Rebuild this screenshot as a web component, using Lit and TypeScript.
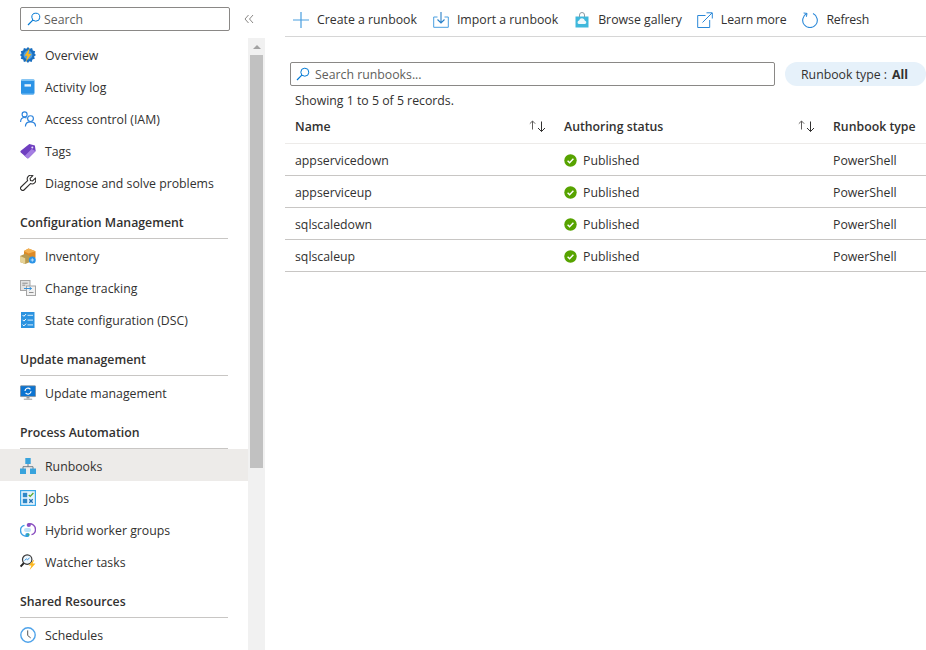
import { LitElement, html, css, svg } from "lit";
import { customElement } from "lit/decorators.js";

const icons: Record<string, unknown> = {
  overview: svg`<path d="M8 0l1.7 1.8 2.4-.7.7 2.4 2.4.7-.7 2.4L16 8l-1.9 1.4.7 2.4-2.4.7-.7 2.4-2.4-.7L8 16l-1.7-1.8-2.4.7-.7-2.4-2.4-.7.7-2.4L0 8l1.5-1.4-.7-2.4 2.4-.7.7-2.4 2.4.7z" fill="#1a6fc0"/><circle cx="8" cy="8" r="4.4" fill="#4f9fe3"/><path d="M9.8 .8L4.6 8.8h2.8L5.8 15l5.6-8H8.4z" fill="#fdb81e"/>`,
  log: svg`<rect x="1" y=".5" width="13.5" height="15" rx="1.4" fill="#2b93e6"/><rect x="1" y=".5" width="13.5" height="1.6" rx=".8" fill="#7fc3f3"/><rect x="4.5" y="5.2" width="6.5" height="2.4" fill="#e8f4fd"/><path d="M1.6 14.8h12.4" stroke="#5fb0ee"/>`,
  iam: svg`<g fill="none" stroke="#2a82dc" stroke-width="1.15"><circle cx="4.6" cy="3.4" r="2.5"/><path d="M.6 11c0-2.9 1.6-4.5 4-4.5 .8 0 1.5.2 2 .5"/><circle cx="10.5" cy="7.6" r="2.9"/><path d="M5.4 15.6c0-3 2.1-4.8 5.1-4.8s5.1 1.8 5.1 4.8"/></g>`,
  tags: svg`<path d="M9.3 1l5.6 1.6.8 5.5-7 7a1.1 1.1 0 0 1-1.6 0L.8 9.4a1.1 1.1 0 0 1 0-1.6z" fill="#6f3fc0"/><path d="M4.6 12.9l7-7 4 2.2-7 7a1.1 1.1 0 0 1-1.6 0z" fill="#a57fe2"/><circle cx="12.3" cy="4.4" r="1" fill="#e8def8"/>`,
  wrench: svg`<path d="M15.4 3.2l-2.8 2.7-2.1-.4-.4-2.1L12.8.7C11 0 9 .4 8 1.7 7.1 2.8 7 4.3 7.6 5.6L1 12a1.7 1.7 0 0 0 0 2.4l.6.6a1.7 1.7 0 0 0 2.4 0l6.5-6.4c1.3.5 2.8.4 3.9-.5 1.2-1 1.8-3 1-4.9z" fill="#fff" stroke="#2f2e2d" stroke-width="1.1"/>`,
  inventory: svg`<path d="M8.5 .5l7 2.8v6.4L8.5 12 4 10V3z" fill="#dd8a26"/><path d="M3.8 3L8.5 5.6l7-2.3-7-2.8z" fill="#f3b152"/><path d="M0 8l5.2-2.2L10 8v6l-4.8 2L0 14z" fill="#b89a50"/><path d="M0 8l5.2 2.2V16L0 14z" fill="#e6d296"/><circle cx="12.3" cy="12" r="3.5" fill="#2b93e6"/><path d="M10.6 12h3.4M12.3 10.3v3.4" stroke="#d2ecff" stroke-width=".8"/>`,
  change: svg`<rect x=".5" y=".5" width="9.5" height="10" fill="#e2e2e2" stroke="#a5a5a5"/><rect x="6.5" y="6" width="9" height="9.5" fill="#f1f1f1" stroke="#a5a5a5"/><path d="M2.3 3.2h5.4M2.3 5.2h3M9 12.5h4.5" stroke="#8f8f8f"/><path d="M4 8.5h7.5M9.5 7l2 1.5-2 1.5" stroke="#3592dc" fill="none"/>`,
  state: svg`<rect x="1" y="0" width="13.5" height="16" fill="#2b93e0"/><path d="M2.6 3l1.3 1.3L6 2.1M2.6 7.8l1.3 1.3L6 6.9M2.6 12.6l1.3 1.3L6 11.7" stroke="#fff" fill="none"/><path d="M7.5 3.3h5.5M7.5 8.1h5.5M7.5 12.9h5.5" stroke="#d6edfc"/>`,
  update: svg`<rect x=".4" y=".8" width="15.2" height="10.8" rx=".6" fill="#0c74d1" stroke="#8a8a8a" stroke-width=".7"/><path d="M5 6a3 3 0 0 1 5.4-1.7M11 6.2a3 3 0 0 1-5.4 1.7" stroke="#fff" fill="none" stroke-width="1.2"/><rect x="6.5" y="11.6" width="3" height="2" fill="#9a9a9a"/><rect x="3.8" y="13.6" width="8.4" height="1.3" fill="#b0b0b0"/>`,
  runbooks: svg`<path d="M8 6v3M3 11V8.7h10V11" stroke="#6f7f8c" fill="none"/><rect x="5.3" y="0" width="5.4" height="6" fill="#38a3dc"/><rect x="0" y="10.5" width="6" height="5.5" fill="#38a3dc"/><rect x="10" y="10.5" width="6" height="5.5" fill="#38a3dc"/>`,
  jobs: svg`<rect x=".6" y=".6" width="14.8" height="14.8" fill="#e6f4fd" stroke="#3ca8e8" stroke-width="1.2"/><rect x="2.8" y="2.8" width="4.4" height="4.4" fill="#2f88c8"/><rect x="2.8" y="8.8" width="4.4" height="4.4" fill="#2f88c8"/><path d="M8.8 5l1.4 1.4L13.4 3" stroke="#5ba829" fill="none" stroke-width="1.3"/><path d="M9.3 9.3l3.4 3.4M12.7 9.3l-3.4 3.4" stroke="#1f6db0" stroke-width="1.3"/>`,
  hybrid: svg`<path d="M8.5 1.8c3.6-.6 7 1.8 7 5.6 0 2.6-1.6 4.6-4 5.2" fill="none" stroke="#8a4fc0" stroke-width="1.4"/><path d="M7.5 14.2C3.9 14.8.5 12.4.5 8.6c0-2.6 1.6-4.6 4-5.2" fill="none" stroke="#3ca0e4" stroke-width="1.4"/><circle cx="8.8" cy="3" r="2.1" fill="#8a4fc0"/><circle cx="7.4" cy="13" r="2.1" fill="#2f9ee0"/><rect x="4" y="6" width="7" height="4" rx="2" fill="#bfe2f8"/><circle cx="8.5" cy="12.5" r="1" fill="#47b06e"/>`,
  watcher: svg`<circle cx="7.2" cy="5.6" r="4.7" fill="#eff7fd" stroke="#3a3a3a" stroke-width="1.2"/><path d="M4.6 6.6l1.7-1.8 1.3 1.1 1.9-2.2" stroke="#3592dc" fill="none"/><path d="M3.8 9.2L.6 12.6" stroke="#222" stroke-width="1.9"/><path d="M13.6 6L8.6 11.6h2.8L9.6 16l5.9-6.4h-2.9L14.2 6z" fill="#fdb81e"/>`,
  clock: svg`<circle cx="8" cy="8" r="7.2" fill="#fff" stroke="#4fa3ea" stroke-width="1.4"/><path d="M7.7 3.4V8.5l3 2.4" stroke="#555" fill="none"/>`,
};

const searchIcon = html`<svg class="mag" viewBox="0 0 14 14"><circle cx="8.8" cy="5.2" r="4" fill="none" stroke="#0078d4"/><path d="M5.8 8.2L1 13" stroke="#0078d4" stroke-width="1.2"/></svg>`;

const nav: ({ h: string } | { i: string; t: string; sel?: boolean })[] = [
  { i: "overview", t: "Overview" },
  { i: "log", t: "Activity log" },
  { i: "iam", t: "Access control (IAM)" },
  { i: "tags", t: "Tags" },
  { i: "wrench", t: "Diagnose and solve problems" },
  { h: "Configuration Management" },
  { i: "inventory", t: "Inventory" },
  { i: "change", t: "Change tracking" },
  { i: "state", t: "State configuration (DSC)" },
  { h: "Update management" },
  { i: "update", t: "Update management" },
  { h: "Process Automation" },
  { i: "runbooks", t: "Runbooks", sel: true },
  { i: "jobs", t: "Jobs" },
  { i: "hybrid", t: "Hybrid worker groups" },
  { i: "watcher", t: "Watcher tasks" },
  { h: "Shared Resources" },
  { i: "clock", t: "Schedules" },
];

const rows = ["appservicedown", "appserviceup", "sqlscaledown", "sqlscaleup"];

const sortIcon = html`<svg class="sort" viewBox="0 0 17 13"><path d="M3.5 9.5V1M.8 3.7L3.5 1l2.7 2.7" fill="none" stroke="#605e5c"/><path d="M12.5 1.5v10M9 8l3.5 3.5L16 8" fill="none" stroke="#323130"/></svg>`;

@customElement("app-root")
export class AppRoot extends LitElement {
  static styles = css`
    :host { display: flex; width: 926px; height: 650px; overflow: hidden; font-family: "Open Sans", "Noto Sans", sans-serif; font-size: 12.3px; color: #323130; background: #fff; }
    .side { width: 265px; height: 650px; flex: none; display: grid; grid-template-columns: 248px 17px; grid-template-rows: 38px 612px; }
    .side-top { grid-column: 1 / 3; display: flex; align-items: flex-start; padding: 7px 0 0 20px; }
    .sbox { box-sizing: border-box; width: 210px; height: 24px; border: 1px solid #8a8886; border-radius: 2px; display: flex; align-items: center; gap: 3px; padding-left: 6px; color: #605e5c; }
    .mag { width: 14px; height: 14px; flex: none; }
    .collapse { width: 10px; height: 10px; margin: 7px 0 0 14px; }
    .menu { overflow: hidden; }
    .item { height: 32px; box-sizing: border-box; display: flex; align-items: center; padding: 2px 0 0 20px; gap: 9px; }
    .item svg { width: 16px; height: 16px; flex: none; }
    .item.sel { background: #edebe9; }
    .head { height: 41px; box-sizing: border-box; margin: 0 20px; border-bottom: 1px solid #c8c6c4; font-weight: 600; line-height: 16px; display: flex; align-items: flex-end; padding-bottom: 7px; }
    .bar { background: #f1f1f1; width: 17px; display: flex; flex-direction: column; align-items: center; }
    .arrow { height: 17px; flex: none; display: flex; align-items: center; justify-content: center; }
    .arrow i { border: 4px solid transparent; border-bottom: 4px solid #a3a3a3; border-top: 0; }
    .thumb { width: 13px; height: 413px; background: #c1c1c1; }
    .main { flex: 1; min-width: 0; padding-left: 20px; }
    .cmd { height: 37px; box-sizing: border-box; border-bottom: 1px solid #d6d6d6; display: flex; align-items: center; padding: 3px 0 0 8px; }
    .cmd span { display: flex; align-items: center; gap: 8px; margin-right: 16px; white-space: nowrap; }
    .cmd span.gallery { margin-right: 15px; }
    .cmd span.tight { letter-spacing: -0.1px; }
    .cmd span.tighter { letter-spacing: -0.2px; }
    .cmd svg { width: 16px; height: 16px; flex: none; }
    .filter { display: flex; align-items: center; gap: 10px; margin: 25px 0 0 5px; }
    .fbox { box-sizing: border-box; width: 485px; height: 24px; border: 1px solid #8a8886; border-radius: 2px; display: flex; align-items: center; gap: 5px; padding-left: 5px; color: #605e5c; }
    .pill { background: #e6f1fa; border-radius: 12px; height: 24px; width: 141px; flex: none; box-sizing: border-box; padding-left: 16px; display: flex; align-items: center; white-space: nowrap; }
    .pill b { font-weight: 700; margin-left: 5px; }
    .count { margin: 5px 0 0 10px; height: 20px; line-height: 20px; }
    .table { width: 641px; overflow: hidden; }
    .tr { display: grid; grid-template-columns: 269px 269px 103px; height: 32px; box-sizing: border-box; padding-top: 2px; border-bottom: 1px solid #c8c6c4; align-items: center; white-space: nowrap; }
    .tr.th { height: 33px; padding-top: 0; padding-bottom: 2px; border-bottom-color: #edebe9; font-weight: 600; }
    .tr > div { padding-left: 10px; min-width: 0; display: flex; align-items: center; }
    .sort { width: 17px; height: 13px; margin-left: auto; margin-right: 8px; flex: none; }
    .ok { width: 13px; height: 13px; margin-right: 6px; flex: none; }
  `;

  render() {
    return html`
      <div class="side">
        <div class="side-top">
          <div class="sbox">${searchIcon}<span>Search</span></div>
          <svg class="collapse" viewBox="0 0 10 10"><path d="M4.5 1L1 5l3.5 4M9 1L5.5 5 9 9" fill="none" stroke="#8a8886"/></svg>
        </div>
        <div class="menu">
          ${nav.map((n) =>
            "h" in n
              ? html`<div class="head">${n.h}</div>`
              : html`<div class="item ${n.sel ? "sel" : ""}"><svg viewBox="0 0 16 16">${icons[n.i]}</svg><span>${n.t}</span></div>`
          )}
        </div>
        <div class="bar"><div class="arrow"><i></i></div><div class="thumb"></div></div>
      </div>
      <div class="main">
        <div class="cmd">
          <span><svg viewBox="0 0 16 16"><path d="M8 0v16M0 8h16" stroke="#4a9fe0" stroke-width="1.2"/></svg>Create a runbook</span>
          <span><svg viewBox="0 0 16 16"><path d="M4.5 5H.7v10.3h14.6V5h-3.8" fill="none" stroke="#4a9fe0"/><path d="M8 0v11M4.5 7.5L8 11l3.5-3.5" fill="none" stroke="#2a80c8" stroke-width="1.1"/></svg>Import a runbook</span>
          <span class="gallery"><svg viewBox="0 0 16 16"><path d="M1.5 4.5h13v11h-13z" fill="#3fb8dc"/><path d="M5.5 5V3a2.5 2.5 0 0 1 5 0v2" fill="none" stroke="#8a9aa3"/><path d="M4.8 12a1.8 1.8 0 0 1 .3-3.5 3 3 0 0 1 5.8.2 1.7 1.7 0 0 1 .2 3.3z" fill="#eef9fc"/></svg>Browse gallery</span>
          <span class="tight"><svg viewBox="0 0 16 16"><path d="M8.5 3.5H.7v12h12V8" fill="none" stroke="#2a88d8"/><path d="M5.5 10.5L15 1M9.5 .8H15.3V6.5" fill="none" stroke="#2a88d8"/></svg>Learn more</span>
          <span class="tighter"><svg viewBox="0 0 16 16"><path d="M5 1.6A7.3 7.3 0 1 0 11 1.6" fill="none" stroke="#2a88d8" stroke-width="1.1"/><path d="M4.4 4.8L5 1.4 1.6 1" fill="none" stroke="#2a88d8"/></svg>Refresh</span>
        </div>
        <div class="filter">
          <div class="fbox">${searchIcon}<span>Search runbooks...</span></div>
          <div class="pill">Runbook type : <b>All</b></div>
        </div>
        <div class="count">Showing 1 to 5 of 5 records.</div>
        <div class="table">
          <div class="tr th"><div>Name${sortIcon}</div><div>Authoring status${sortIcon}</div><div>Runbook type</div></div>
          ${rows.map(
            (r) => html`<div class="tr">
              <div>${r}</div>
              <div><svg class="ok" viewBox="0 0 13 13"><circle cx="6.5" cy="6.5" r="6.2" fill="#57a300"/><path d="M3.6 6.7l2 2 3.8-4" fill="none" stroke="#fff" stroke-width="1.4"/></svg>Published</div>
              <div>PowerShell</div>
            </div>`
          )}
        </div>
      </div>
    `;
  }
}
